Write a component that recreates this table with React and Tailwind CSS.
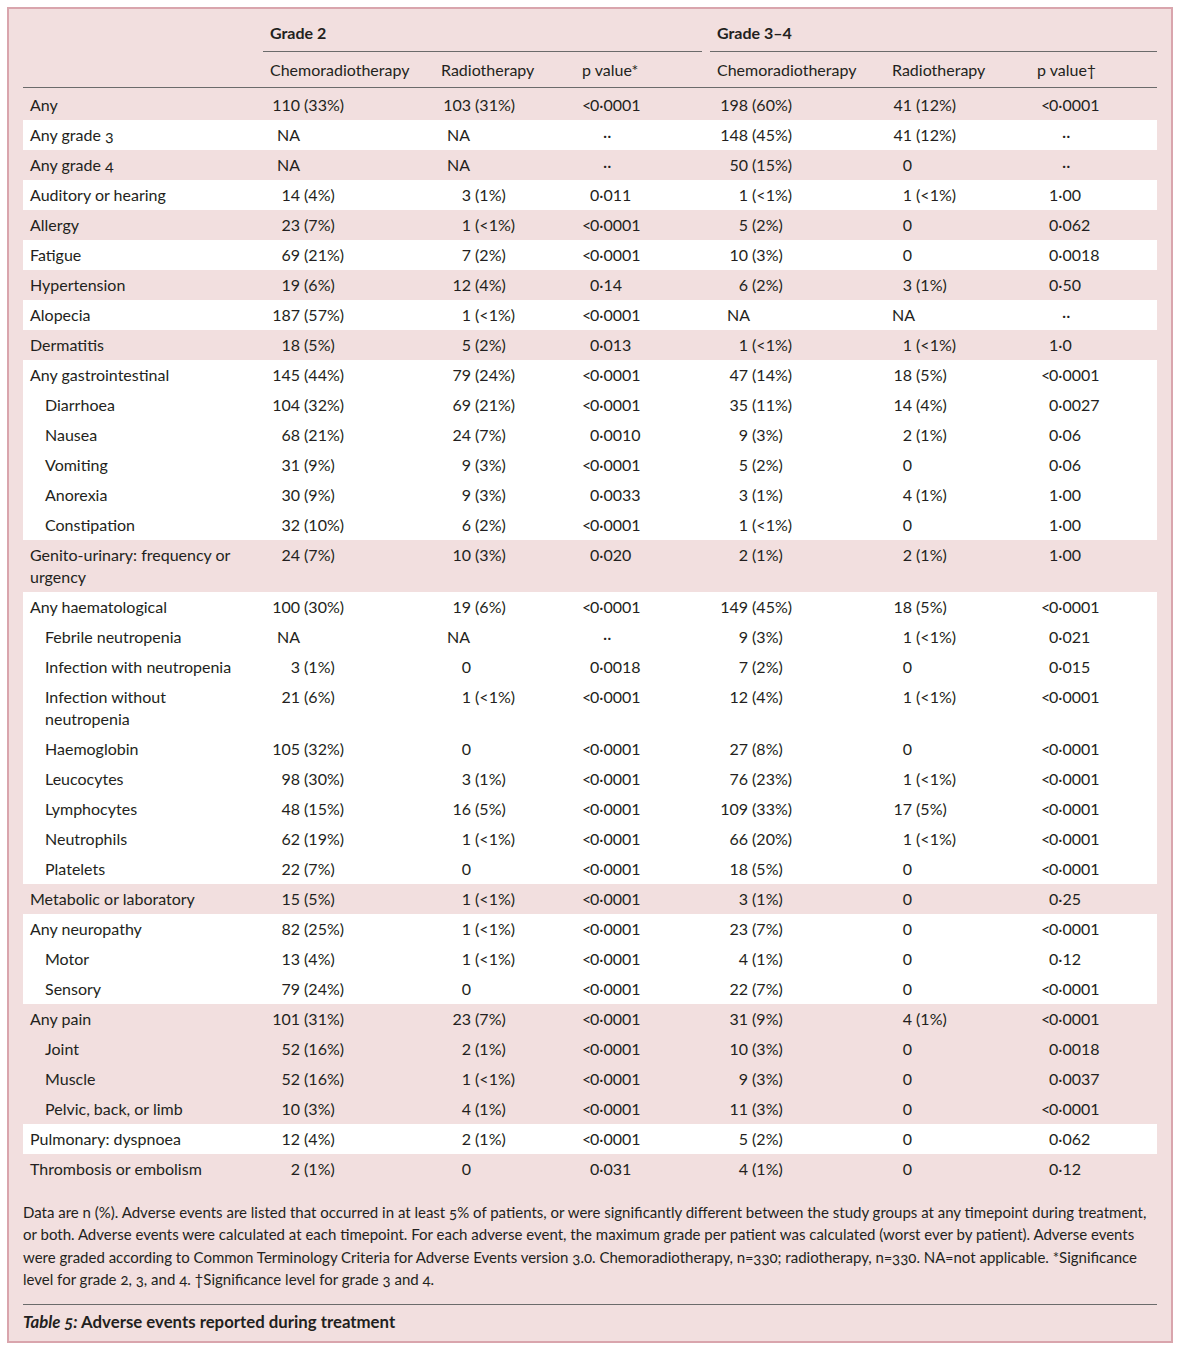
/**
 * AdverseEventsTable
 *
 * Journal-style table: grade 2 and grade 3–4 adverse events,
 * chemoradiotherapy vs radiotherapy, with footnote and caption.
 */

const GRID = 'grid grid-cols-[247px_171px_141px_135px_175px_145px_1fr]';

// count columns: left pad, digit box width, NA pad
const COUNT = {
  c1: { box: 'pl-[2px]', num: 'w-[28px]', na: 'pl-[7px]' },
  c2: { box: 'pl-[2px]', num: 'w-[28px]', na: 'pl-[6px]' },
  c4: { box: 'pl-[3px]', num: 'w-[28px]', na: 'pl-[10px]' },
  c5: { box: 'pl-[1px]', num: 'w-[19px]', na: 'pl-0' },
};

const PVAL = {
  p1: { box: 'pl-0', dots: 'pl-[21px]' },
  p2: { box: 'pl-[4px]', dots: 'pl-[25px]' },
};

const groups = [
  { bg: 'pink', rows: [['Any', '110 (33%)', '103 (31%)', '<0·0001', '198 (60%)', '41 (12%)', '<0·0001']] },
  { bg: 'white', rows: [['Any grade 3', 'NA', 'NA', '··', '148 (45%)', '41 (12%)', '··']] },
  { bg: 'pink', rows: [['Any grade 4', 'NA', 'NA', '··', '50 (15%)', '0', '··']] },
  { bg: 'white', rows: [['Auditory or hearing', '14 (4%)', '3 (1%)', '0·011', '1 (<1%)', '1 (<1%)', '1·00']] },
  { bg: 'pink', rows: [['Allergy', '23 (7%)', '1 (<1%)', '<0·0001', '5 (2%)', '0', '0·062']] },
  { bg: 'white', rows: [['Fatigue', '69 (21%)', '7 (2%)', '<0·0001', '10 (3%)', '0', '0·0018']] },
  { bg: 'pink', rows: [['Hypertension', '19 (6%)', '12 (4%)', '0·14', '6 (2%)', '3 (1%)', '0·50']] },
  { bg: 'white', rows: [['Alopecia', '187 (57%)', '1 (<1%)', '<0·0001', 'NA', 'NA', '··']] },
  { bg: 'pink', rows: [['Dermatitis', '18 (5%)', '5 (2%)', '0·013', '1 (<1%)', '1 (<1%)', '1·0']] },
  {
    bg: 'white',
    rows: [
      ['Any gastrointestinal', '145 (44%)', '79 (24%)', '<0·0001', '47 (14%)', '18 (5%)', '<0·0001'],
      ['Diarrhoea', '104 (32%)', '69 (21%)', '<0·0001', '35 (11%)', '14 (4%)', '0·0027', true],
      ['Nausea', '68 (21%)', '24 (7%)', '0·0010', '9 (3%)', '2 (1%)', '0·06', true],
      ['Vomiting', '31 (9%)', '9 (3%)', '<0·0001', '5 (2%)', '0', '0·06', true],
      ['Anorexia', '30 (9%)', '9 (3%)', '0·0033', '3 (1%)', '4 (1%)', '1·00', true],
      ['Constipation', '32 (10%)', '6 (2%)', '<0·0001', '1 (<1%)', '0', '1·00', true],
    ],
  },
  {
    bg: 'pink',
    rows: [[['Genito-urinary: frequency or', 'urgency'], '24 (7%)', '10 (3%)', '0·020', '2 (1%)', '2 (1%)', '1·00']],
  },
  {
    bg: 'white',
    rows: [
      ['Any haematological', '100 (30%)', '19 (6%)', '<0·0001', '149 (45%)', '18 (5%)', '<0·0001'],
      ['Febrile neutropenia', 'NA', 'NA', '··', '9 (3%)', '1 (<1%)', '0·021', true],
      ['Infection with neutropenia', '3 (1%)', '0', '0·0018', '7 (2%)', '0', '0·015', true],
      [['Infection without', 'neutropenia'], '21 (6%)', '1 (<1%)', '<0·0001', '12 (4%)', '1 (<1%)', '<0·0001', true],
      ['Haemoglobin', '105 (32%)', '0', '<0·0001', '27 (8%)', '0', '<0·0001', true],
      ['Leucocytes', '98 (30%)', '3 (1%)', '<0·0001', '76 (23%)', '1 (<1%)', '<0·0001', true],
      ['Lymphocytes', '48 (15%)', '16 (5%)', '<0·0001', '109 (33%)', '17 (5%)', '<0·0001', true],
      ['Neutrophils', '62 (19%)', '1 (<1%)', '<0·0001', '66 (20%)', '1 (<1%)', '<0·0001', true],
      ['Platelets', '22 (7%)', '0', '<0·0001', '18 (5%)', '0', '<0·0001', true],
    ],
  },
  { bg: 'pink', rows: [['Metabolic or laboratory', '15 (5%)', '1 (<1%)', '<0·0001', '3 (1%)', '0', '0·25']] },
  {
    bg: 'white',
    rows: [
      ['Any neuropathy', '82 (25%)', '1 (<1%)', '<0·0001', '23 (7%)', '0', '<0·0001'],
      ['Motor', '13 (4%)', '1 (<1%)', '<0·0001', '4 (1%)', '0', '0·12', true],
      ['Sensory', '79 (24%)', '0', '<0·0001', '22 (7%)', '0', '<0·0001', true],
    ],
  },
  {
    bg: 'pink',
    rows: [
      ['Any pain', '101 (31%)', '23 (7%)', '<0·0001', '31 (9%)', '4 (1%)', '<0·0001'],
      ['Joint', '52 (16%)', '2 (1%)', '<0·0001', '10 (3%)', '0', '0·0018', true],
      ['Muscle', '52 (16%)', '1 (<1%)', '<0·0001', '9 (3%)', '0', '0·0037', true],
      ['Pelvic, back, or limb', '10 (3%)', '4 (1%)', '<0·0001', '11 (3%)', '0', '<0·0001', true],
    ],
  },
  { bg: 'white', rows: [['Pulmonary: dyspnoea', '12 (4%)', '2 (1%)', '<0·0001', '5 (2%)', '0', '0·062']] },
  { bg: 'pink', rows: [['Thrombosis or embolism', '2 (1%)', '0', '0·031', '4 (1%)', '0', '0·12']] },
];

function Count({ value, col }) {
  const c = COUNT[col];
  if (value === 'NA') return <div className={c.na}>NA</div>;
  const i = value.indexOf(' ');
  const n = i < 0 ? value : value.slice(0, i);
  const pct = i < 0 ? null : value.slice(i);
  return (
    <div className={c.box}>
      <span className={`inline-block text-right ${c.num}`}>{n}</span>
      {pct && <span className="whitespace-pre">{pct}</span>}
    </div>
  );
}

function PValue({ value, col }) {
  const c = PVAL[col];
  if (value === '··') return <div className={c.dots}>··</div>;
  const lt = value.startsWith('<');
  return (
    <div className={c.box}>
      <span className="inline-block w-[8px]">{lt ? '<' : ''}</span>
      {lt ? value.slice(1) : value}
    </div>
  );
}

function Row({ r }) {
  const [label, c1, c2, p1, c4, c5, p2, sub] = r;
  return (
    <div className={`${GRID} py-[4px] leading-[22px]`}>
      <div className={`oldstyle-nums ${sub ? 'pl-[22px]' : 'pl-[7px]'}`}>
        {Array.isArray(label) ? (
          <>
            {label[0]}
            <br />
            {label[1]}
          </>
        ) : (
          label
        )}
      </div>
      <Count value={c1} col="c1" />
      <Count value={c2} col="c2" />
      <PValue value={p1} col="p1" />
      <Count value={c4} col="c4" />
      <Count value={c5} col="c5" />
      <PValue value={p2} col="p2" />
    </div>
  );
}

export default function App() {
  return (
    <div className="min-h-[1350px] bg-white pt-[7px] pl-[7px] font-['Lato',sans-serif] text-[16px] text-[#231f20]">
      <div className="w-[1166px] border-2 border-[#d9a5ad] bg-[#f2dfdf] px-[14px] pb-[8px]">
        {/* Group header */}
        <div className="flex pt-[12px]">
          <div className="w-[240px]" />
          <div className="w-[439px] border-b border-[#6b6b6b] pb-[6px] pl-[7px] font-bold leading-[24px]">Grade 2</div>
          <div className="w-[8px]" />
          <div className="flex-1 border-b border-[#6b6b6b] pb-[6px] pl-[7px] font-bold leading-[24px]">Grade 3–4</div>
        </div>

        {/* Column header */}
        <div className={`${GRID} border-b border-[#6b6b6b] pt-[6px] pb-[5px] leading-[24px]`}>
          <div />
          <div>Chemoradiotherapy</div>
          <div>Radiotherapy</div>
          <div>p value*</div>
          <div>Chemoradiotherapy</div>
          <div>Radiotherapy</div>
          <div>p value†</div>
        </div>

        {/* Body */}
        <div className="mt-[2px]">
          {groups.map((g, gi) => (
            <div key={gi} className={g.bg === 'white' ? 'bg-white' : 'bg-[#f2dfdf]'}>
              {g.rows.map((r, ri) => (
                <Row key={ri} r={r} />
              ))}
            </div>
          ))}
        </div>

        {/* Footnote */}
        <p className="mt-[17px] text-[15px] leading-[22.3px] oldstyle-nums">
          Data are n (%). Adverse events are listed that occurred in at least 5% of patients, or were significantly different between the study groups at any timepoint during treatment,
          <br />
          or both. Adverse events were calculated at each timepoint. For each adverse event, the maximum grade per patient was calculated (worst ever by patient). Adverse events
          <br />
          were graded according to Common Terminology Criteria for Adverse Events version 3.0. Chemoradiotherapy, n=330; radiotherapy, n=330. NA=not applicable. *Significance
          <br />
          level for grade 2, 3, and 4. †Significance level for grade 3 and 4.
        </p>

        {/* Caption */}
        <div className="mt-[14px] border-t border-[#6b6b6b] pt-[6px] text-[16.8px] font-bold leading-[22px] oldstyle-nums">
          <span className="italic">Table 5:</span> Adverse events reported during treatment
        </div>
      </div>
    </div>
  );
}
